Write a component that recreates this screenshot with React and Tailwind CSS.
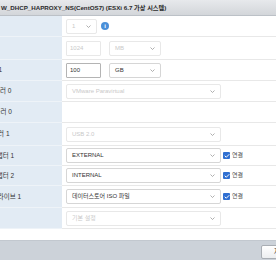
import { Check } from 'lucide-react'

const font = { fontFamily: '"Liberation Sans", "Noto Sans CJK KR", sans-serif' }

export default function App() {
  return (
    <div className="w-[276px] h-[260px] overflow-hidden bg-white flex flex-col text-[#333]" style={font}>
      {/* Title bar */}
      <div className="h-[16px] shrink-0 flex items-center pl-[1px] bg-gradient-to-b from-[#e7e9ec] to-[#d3d6da] border-b border-[#bcc1c7]">
        <span className="text-[6.2px] font-bold whitespace-nowrap text-[#2b2b2b]">
          W_DHCP_HAPROXY_NS(CentOS7) (ESXi 6.7 가상 시스템)
        </span>
      </div>

      {/* Rows */}
      <div className="flex flex-col">
        <Row h="h-[21px]" label="CPU">
          <Select w="w-[31px]" value="1" disabled />
          <InfoIcon />
        </Row>
        <Row h="h-[23px]" label="메모리">
          <Input w="w-[35px]" value="1024" disabled />
          <div className="w-[8px]" />
          <Select w="w-[52px]" value="MB" disabled />
        </Row>
        <Row h="h-[21px]" label="하드 디스크 1">
          <Input w="w-[35px]" value="100" />
          <div className="w-[8px]" />
          <Select w="w-[52px]" value="GB" />
        </Row>
        <Row h="h-[21px]" label="SCSI 컨트롤러 0">
          <Select w="w-[155px]" value="VMware Paravirtual" disabled />
        </Row>
        <Row h="h-[21px]" label="SATA 컨트롤러 0" />
        <Row h="h-[23px]" label="USB 컨트롤러 1">
          <Select w="w-[155px]" value="USB 2.0" disabled />
        </Row>
        <Row h="h-[20px]" label="네트워크 어댑터 1">
          <Select w="w-[155px]" value="EXTERNAL" />
          <Connect />
        </Row>
        <Row h="h-[20px]" label="네트워크 어댑터 2">
          <Select w="w-[155px]" value="INTERNAL" />
          <Connect />
        </Row>
        <Row h="h-[22px]" label="CD/DVD 드라이브 1">
          <Select w="w-[155px]" value="데이터스토어 ISO 파일" />
          <Connect />
        </Row>
        <Row h="h-[21px]" label="비디오 카드">
          <Select w="w-[155px]" value="기본 설정" disabled />
        </Row>
      </div>

      <div className="flex-1" />

      {/* Footer */}
      <div className="h-[20px] shrink-0 bg-[#ccd2d9] border-t border-[#c2c8cf] flex items-start justify-end pt-[4px]">
        <button className="w-[46px] h-[14px] mr-[-31px] rounded-[2px] border border-[#a9aeb4] bg-gradient-to-b from-white to-[#eceef0] text-[6.5px] text-[#222] text-left pl-[12px]">
          저장
        </button>
      </div>
    </div>
  )
}

function Row({ h, label, children }) {
  return (
    <div className={`flex ${h}`}>
      <div className="w-[62px] shrink-0 overflow-hidden bg-[#e2ebf4] border-b border-[#eef3f8] flex items-center">
        <span className="ml-[-35px] text-[6.5px] whitespace-nowrap text-[#333]">{label}</span>
      </div>
      <div className="flex-1 border-b border-[#e8e8e8] flex items-center pl-[4px]">
        {children}
      </div>
    </div>
  )
}

function Chevron() {
  return (
    <svg width="5" height="3" viewBox="0 0 5 3" className="shrink-0">
      <polyline points="0.5,0.5 2.5,2.5 4.5,0.5" fill="none" stroke="#9a9a9a" strokeWidth="0.8" />
    </svg>
  )
}

function Select({ w, value, disabled }) {
  return (
    <div
      className={`${w} h-[15px] shrink-0 flex items-center justify-between rounded-[2px] border bg-white pl-[5px] pr-[5px] text-[6px] whitespace-nowrap ${
        disabled ? 'border-[#e8e8e8] text-[#c9c9c9]' : 'border-[#d6d6d6] text-[#333]'
      }`}
    >
      <span>{value}</span>
      <Chevron />
    </div>
  )
}

function Input({ w, value, disabled }) {
  return (
    <div
      className={`${w} h-[15px] shrink-0 flex items-center rounded-[1px] border bg-white pl-[3px] text-[6px] ${
        disabled ? 'border-[#e8e8e8] text-[#c9c9c9]' : 'border-[#b4b4b4] text-[#333]'
      }`}
    >
      {value}
    </div>
  )
}

function InfoIcon() {
  return (
    <div className="ml-[4px] w-[8px] h-[8px] rounded-full bg-[#4a8fd8] flex items-center justify-center text-white text-[6px] font-bold leading-none">
      i
    </div>
  )
}

function Connect() {
  return (
    <div className="flex items-center ml-[2px] gap-[2px]">
      <div className="w-[7px] h-[7px] rounded-[1px] bg-[#2f6fd1] flex items-center justify-center">
        <Check size={6} strokeWidth={4} color="#fff" />
      </div>
      <span className="text-[6px] text-[#555]">연결</span>
    </div>
  )
}
